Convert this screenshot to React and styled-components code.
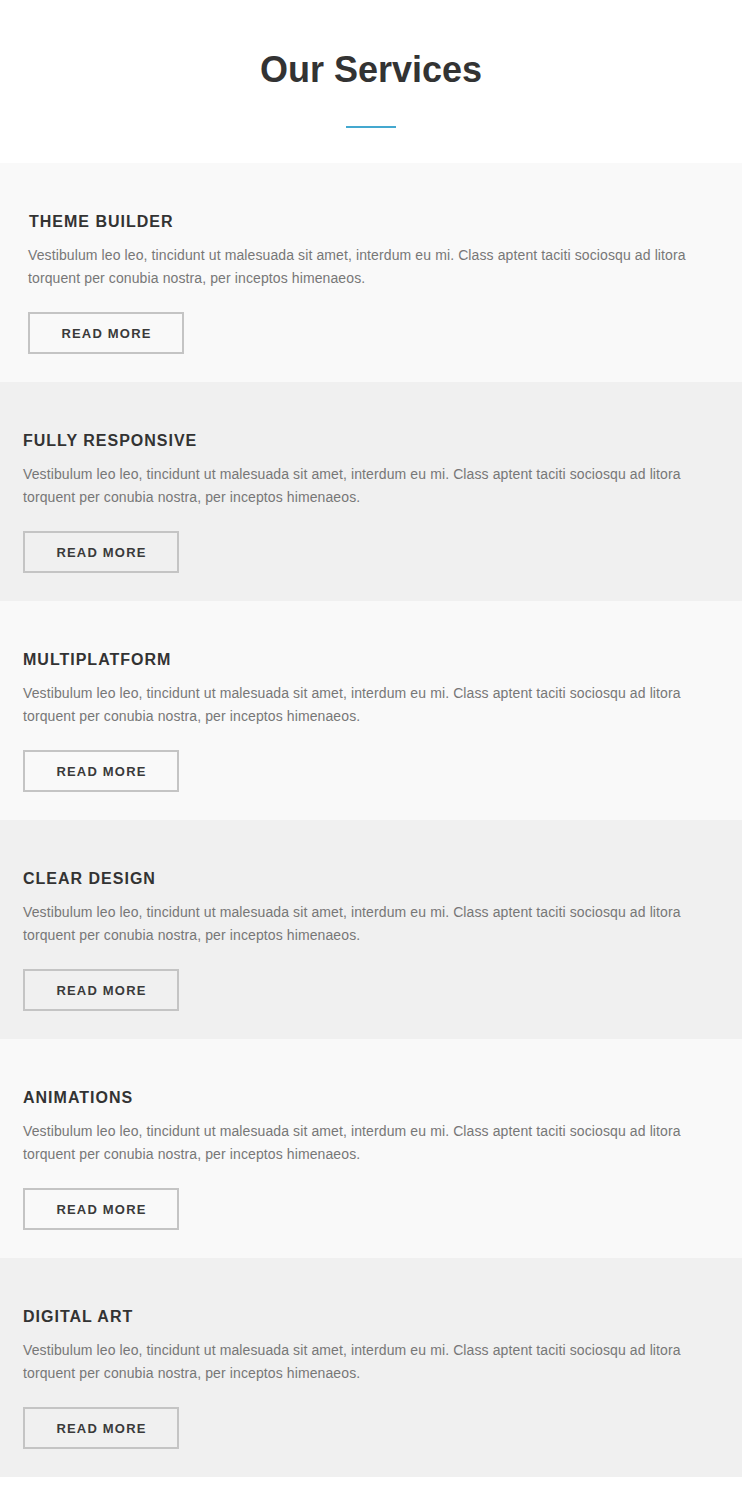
import React from 'react';
import styled, { createGlobalStyle } from 'styled-components';

const GlobalStyle = createGlobalStyle`
  html, body {
    margin: 0;
    padding: 0;
    background: #fff;
  }
  body {
    font-family: 'Liberation Sans', Arial, sans-serif;
  }
  * {
    box-sizing: border-box;
  }
`;

const Page = styled.div`
  width: 742px;
  padding-bottom: 14px;
  background: #fff;
`;

const Header = styled.header`
  display: flex;
  flex-direction: column;
  align-items: center;
  padding-top: 47px;
  height: 163px;
`;

const Heading = styled.h1`
  margin: 0;
  font-size: 36px;
  line-height: 46px;
  font-weight: 700;
  color: #333;
`;

const Divider = styled.span`
  display: block;
  width: 50px;
  height: 2px;
  margin-top: 33px;
  background: #44a8cf;
`;

const Service = styled.section`
  height: 219px;
  padding: 49px 23px 0 ${props => (props.inset ? 28 : 23)}px;
  background: ${props => (props.shade ? '#f0f0f0' : '#f9f9f9')};
`;

const ServiceTitle = styled.h3`
  margin: 0 0 0 ${props => (props.inset ? 1 : 0)}px;
  font-size: 16px;
  line-height: 20px;
  font-weight: 700;
  letter-spacing: 1px;
  color: #333;
`;

const ServiceText = styled.p`
  margin: 12px 0 0;
  font-size: 14px;
  line-height: 23px;
  letter-spacing: 0.11px;
  color: #777;
`;

const ReadMore = styled.a`
  display: inline-flex;
  align-items: center;
  justify-content: center;
  margin-top: 22px;
  width: 156px;
  height: 42px;
  padding-left: 1px;
  border: 2px solid #c4c4c4;
  font-size: 13px;
  font-weight: 700;
  letter-spacing: 1.2px;
  color: #3a3a3a;
  text-decoration: none;
`;

const text =
  'Vestibulum leo leo, tincidunt ut malesuada sit amet, interdum eu mi. Class aptent taciti sociosqu ad litora torquent per conubia nostra, per inceptos himenaeos.';

const services = [
  'Theme Builder',
  'Fully Responsive',
  'Multiplatform',
  'Clear Design',
  'Animations',
  'Digital Art',
];

const App = () => {
  return (
    <Page>
      <GlobalStyle />
      <Header>
        <Heading>Our Services</Heading>
        <Divider />
      </Header>
      {services.map((name, i) => (
        <Service key={name} shade={i % 2 === 1} inset={i === 0}>
          <ServiceTitle inset={i === 0}>{name.toUpperCase()}</ServiceTitle>
          <ServiceText>{text}</ServiceText>
          <ReadMore href="#">READ MORE</ReadMore>
        </Service>
      ))}
    </Page>
  );
};

export default App;
